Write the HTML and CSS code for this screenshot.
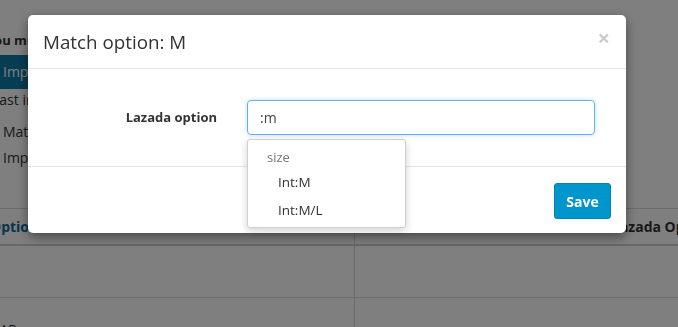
FILE: index.html
```html
<!DOCTYPE html>
<html>
<head>
<meta charset="utf-8">
<link rel="stylesheet" href="styles.css">
</head>
<body>
<div class="page">
  <p class="intro">You must import options first</p>
  <div class="import-btn">Import options</div>
  <p class="last">Last import: never</p>
  <p class="link">Match options</p>
  <p class="link">Import options</p>
  <div class="table">
    <div class="thead">
      <div class="cell th teal">Option</div>
      <div class="cell th dark">Lazada Option</div>
    </div>
    <div class="row">
      <div class="cell"></div>
      <div class="cell"></div>
    </div>
    <div class="row">
      <div class="cell ab">AB</div>
      <div class="cell"></div>
    </div>
  </div>
</div>
<div class="backdrop"></div>
<div class="modal">
  <div class="modal-header">
    <h4 class="modal-title">Match option: M</h4>
    <span class="close">×</span>
  </div>
  <div class="modal-body">
    <label class="label">Lazada option</label>
    <div class="field">
      <div class="input">:m</div>
      <div class="dropdown">
        <div class="group">size</div>
        <div class="item">Int:M</div>
        <div class="item">Int:M/L</div>
      </div>
    </div>
  </div>
  <div class="modal-footer">
    <button class="save">Save</button>
  </div>
</div>
</body>
</html>
```
FILE: styles.css
```css
* { box-sizing: border-box; }
html, body { margin: 0; padding: 0; }
body {
  width: 678px;
  height: 327px;
  overflow: hidden;
  font-family: "Open Sans", "Noto Sans", sans-serif;
  background: #fff;
  color: #333;
}
.page {
  margin-left: -14px;
  width: 692px;
  padding-top: 31px;
}
.intro {
  margin: 0;
  font-size: 13px;
  font-weight: 700;
  line-height: 18px;
  white-space: nowrap;
}
.import-btn {
  margin-top: 6px;
  width: 110px;
  height: 34px;
  background: #0f7aa6;
  color: #fff;
  font-size: 14px;
  line-height: 34px;
  padding-left: 17px;
  white-space: nowrap;
}
.last {
  margin: 1px 0 0 6px;
  font-size: 14px;
  line-height: 20px;
  white-space: nowrap;
}
.link {
  margin: 12px 0 0 17px;
  font-size: 14px;
  line-height: 20px;
  white-space: nowrap;
}
.link + .link { margin-top: 6px; }
.table {
  margin-top: 40px;
  border-top: 1px solid #d8d8d8;
}
.thead, .row {
  display: grid;
  grid-template-columns: 369px 1fr;
}
.thead { height: 37px; border-bottom: 2px solid #d0d0d0; }
.row { height: 52px; border-bottom: 1px solid #d8d8d8; }
.cell { border-right: 1px solid #d8d8d8; font-size: 14px; white-space: nowrap; }
.cell:last-child { border-right: none; }
.th { font-weight: 700; padding-top: 8px; padding-left: 4px; }
.teal { color: #0b6d93; }
.dark { padding-left: 257px; color: #333; }
.ab { padding-top: 22px; padding-left: 14px; font-size: 13px; }

.backdrop {
  position: fixed;
  inset: 0;
  background: rgba(0,0,0,0.5);
}
.modal {
  position: fixed;
  left: 28px;
  top: 15px;
  width: 598px;
  background: #fff;
  border-radius: 5px;
  box-shadow: 0 4px 12px rgba(0,0,0,0.45);
}
.modal-header {
  height: 54px;
  padding: 15px;
  border-bottom: 1px solid #e5e5e5;
  display: flex;
  justify-content: space-between;
  align-items: center;
}
.modal-title {
  margin: 0;
  font-size: 18.8px;
  font-weight: 400;
  color: #333;
  line-height: 24px;
}
.close {
  color: #000;
  opacity: 0.2;
  font-size: 22px;
  font-weight: 700;
  line-height: 1;
  margin-right: 1px;
  margin-top: -9px;
}
.modal-body {
  height: 97px;
  padding: 31px 15px;
  display: grid;
  grid-template-columns: 204px 348px;
  align-items: start;
}
.label {
  font-size: 13px;
  font-weight: 700;
  color: #333;
  text-align: right;
  padding-right: 30px;
  line-height: 35px;
}
.field { position: relative; }
.input {
  height: 35px;
  border: 1px solid #66afe9;
  border-radius: 4px;
  box-shadow: 0 0 4px rgba(102,175,233,0.45);
  padding: 0 12px;
  font-size: 14px;
  line-height: 33px;
  color: #444;
}
.dropdown {
  position: absolute;
  left: 0;
  top: 39px;
  width: 159px;
  height: 89px;
  background: #fff;
  border: 1px solid #d0d0d0;
  border-radius: 3px;
  box-shadow: 0 3px 8px rgba(0,0,0,0.18);
  padding-top: 6px;
}
.group {
  font-size: 13px;
  color: #777;
  padding-left: 19px;
  line-height: 22px;
}
.item {
  font-size: 13.5px;
  color: #333;
  padding-left: 30px;
  line-height: 28px;
}
.modal-footer {
  height: 67px;
  padding: 16px 15px;
  border-top: 1px solid #e5e5e5;
  display: flex;
  justify-content: flex-end;
}
.save {
  width: 57px;
  height: 36px;
  background: #0096cc;
  border: 1px solid #0085b8;
  border-radius: 3px;
  color: #fff;
  font-family: "Open Sans", "Noto Sans", sans-serif;
  font-size: 14px;
  font-weight: 700;
  padding: 0;
}
```
